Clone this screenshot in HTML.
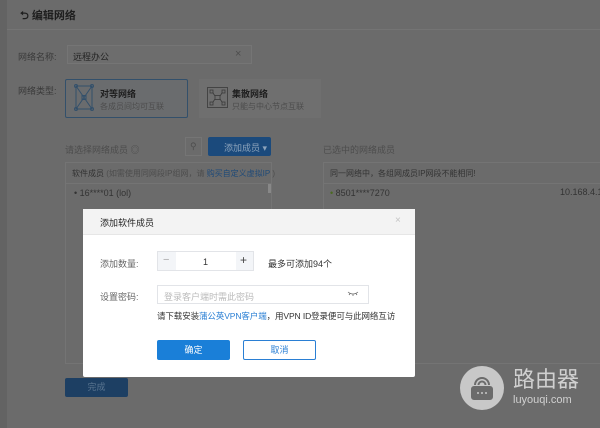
<!DOCTYPE html>
<html><head><meta charset="utf-8"><style>
*{box-sizing:border-box;margin:0;padding:0}
body{width:600px;height:428px;overflow:hidden;background:#6b6b6b;font-family:"Liberation Sans","Noto Sans CJK SC",sans-serif;position:relative;font-size:9px;color:#2a2a2a}
.a{position:absolute;white-space:nowrap}
.t{color:#3a3a3a}
.l{color:#4d4d4d}
</style></head><body>
<div class="a" style="left:0;top:0;width:7px;height:428px;background:#636363"></div>
<div class="a" style="left:7px;top:29px;width:593px;height:1px;background:#747474"></div>
<div class="a" style="left:20px;top:7px;font-size:11px;color:#1e1e1e;font-weight:bold">⮌ 编辑网络</div>
<div class="a t" style="left:18px;top:50px">网络名称:</div>
<div class="a" style="left:67px;top:45px;width:185px;height:19px;border:1px solid #757575;background:#6d6d6d"></div>
<div class="a" style="left:73px;top:50px;color:#222">远程办公</div>
<div class="a" style="left:235px;top:48px;color:#4d4d4d;font-size:11px">×</div>
<div class="a t" style="left:18px;top:84px">网络类型:</div>
<div class="a" style="left:65px;top:79px;width:123px;height:39px;border:1px solid #33506b;border-radius:2px;background:#6a6c6e"></div>
<svg class="a" style="left:74px;top:84px" width="20" height="27" viewBox="0 0 20 27" fill="none" stroke="#33506b" stroke-width="1"><rect x="2" y="2" width="16" height="23"/><path d="M2 2L18 25M18 2L2 25"/><circle cx="2" cy="2" r="1.5"/><circle cx="18" cy="2" r="1.5"/><circle cx="2" cy="25" r="1.5"/><circle cx="18" cy="25" r="1.5"/><rect x="8" y="11.5" width="4" height="4"/></svg>
<div class="a" style="left:100px;top:87px;color:#1e1e1e;font-weight:bold">对等网络</div>
<div class="a l" style="left:100px;top:101px;font-size:8px">各成员间均可互联</div>
<div class="a" style="left:199px;top:79px;width:122px;height:39px;background:#6f6f6f"></div>
<svg class="a" style="left:207px;top:87px" width="21" height="21" viewBox="0 0 21 21" fill="none" stroke="#3a3a3a" stroke-width="0.8"><rect x="0.5" y="0.5" width="20" height="20"/><rect x="3" y="3" width="3" height="3"/><rect x="15" y="3" width="3" height="3"/><rect x="3" y="15" width="3" height="3"/><rect x="15" y="15" width="3" height="3"/><rect x="8" y="8.5" width="5" height="4"/><path d="M6 6L8 9M15 6L13 9M6 15L8 12M15 15L13 12"/></svg>
<div class="a" style="left:232px;top:87px;color:#1e1e1e;font-weight:bold">集散网络</div>
<div class="a l" style="left:232px;top:101px;font-size:8px">只能与中心节点互联</div>
<div class="a l" style="left:65px;top:143px">请选择网络成员 ◎</div>
<div class="a" style="left:185px;top:137px;width:17px;height:19px;border:1px solid #757575"></div>
<div class="a" style="left:190px;top:141px;color:#4d4d4d">⚲</div>
<div class="a" style="left:208px;top:137px;width:63px;height:19px;background:#1b4a7c;border-radius:2px;color:#8ca3bb;padding:4px 0 0 16px">添加成员 ▾</div>
<div class="a l" style="left:323px;top:143px">已选中的网络成员</div>
<div class="a" style="left:65px;top:162px;width:207px;height:202px;border:1px solid #747474"></div>
<div class="a" style="left:66px;top:183px;width:205px;height:1px;background:#747474"></div>
<div class="a" style="left:72px;top:168px;font-size:8px;color:#333">软件成员 <span style="color:#4d4d4d">(如需使用同网段IP组网，请 <span style="color:#1f4a78">购买自定义虚拟IP</span> )</span></div>
<div class="a" style="left:268px;top:184px;width:3px;height:9px;background:#888"></div>
<div class="a" style="left:74px;top:188px;color:#333">• 16****01 (lol)</div>
<div class="a" style="left:323px;top:162px;width:277px;height:202px;border:1px solid #747474;border-right:none"></div>
<div class="a" style="left:324px;top:183px;width:276px;height:1px;background:#747474"></div>
<div class="a" style="left:330px;top:168px;font-size:8px;color:#333">同一网络中，各组网成员IP网段不能相同!</div>
<div class="a" style="left:330px;top:188px;color:#333"><span style="color:#4a6a20">•</span> 8501****7270</div>
<div class="a" style="left:560px;top:187px;color:#333">10.168.4.1</div>
<div class="a" style="left:65px;top:378px;width:63px;height:19px;background:#1d3f63;border-radius:2px;color:#5a7590;text-align:center;line-height:19px">完成</div>
<!-- modal -->
<div class="a" style="left:83px;top:209px;width:332px;height:168px;background:#fff;border-radius:2px"></div>
<div class="a" style="left:83px;top:209px;width:332px;height:26px;background:#f3f3f3;border-bottom:1px solid #e6e6e6"></div>
<div class="a" style="left:100px;top:216px;font-size:9px;color:#222">添加软件成员</div>
<div class="a" style="left:395px;top:215px;color:#c4c4c4;font-size:10px">×</div>
<div class="a" style="left:100px;top:257px;color:#666">添加数量:</div>
<div class="a" style="left:157px;top:251px;width:97px;height:20px;border:1px solid #e2e4e8;background:#f3f5f8"></div>
<div class="a" style="left:176px;top:251px;width:60px;height:20px;background:#fff;border-top:1px solid #e2e4e8;border-bottom:1px solid #e2e4e8"></div>
<div class="a" style="left:163px;top:254px;color:#aaa;font-size:11px">−</div>
<div class="a" style="left:203px;top:257px;color:#333">1</div>
<div class="a" style="left:240px;top:253px;color:#444;font-size:12px">+</div>
<div class="a" style="left:268px;top:257px;color:#333">最多可添加94个</div>
<div class="a" style="left:100px;top:290px;color:#666">设置密码:</div>
<div class="a" style="left:157px;top:285px;width:212px;height:19px;border:1px solid #e2e4e8"></div>
<div class="a" style="left:164px;top:290px;color:#bbb">登录客户端时需此密码</div>
<svg class="a" style="left:347px;top:291px" width="12" height="6" viewBox="0 0 12 6" fill="none" stroke="#666" stroke-width="0.8"><path d="M1 1Q6 5 11 1M3 2.5L2 4M6 3.5V5M9 2.5L10 4"/></svg>
<div class="a" style="left:157px;top:310px;color:#333;font-size:8.5px;letter-spacing:-0.1px">请下载安装<span style="color:#2a7fd4">蒲公英VPN客户端</span>，用VPN ID登录便可与此网络互访</div>
<div class="a" style="left:157px;top:340px;width:73px;height:20px;background:#1a7fd8;border-radius:2px;color:#fff;text-align:center;line-height:20px">确定</div>
<div class="a" style="left:243px;top:340px;width:73px;height:20px;border:1px solid #2a7fd4;border-radius:2px;color:#2a7fd4;text-align:center;line-height:18px">取消</div>
<!-- watermark -->
<div class="a" style="left:460px;top:366px;width:44px;height:44px;border-radius:50%;background:#c8c8c8"></div>
<svg class="a" style="left:469px;top:373px" width="26" height="30" viewBox="0 0 26 30" fill="none" stroke="#6b6b6b" stroke-width="2"><path d="M6 12a7 7 0 0 1 14 0M9.5 12a3.5 3.5 0 0 1 7 0"/><rect x="3" y="14" width="20" height="12" rx="2" fill="#6b6b6b"/><circle cx="9" cy="20" r="1" fill="#c8c8c8" stroke="none"/><circle cx="13" cy="20" r="1" fill="#c8c8c8" stroke="none"/><circle cx="17" cy="20" r="1" fill="#c8c8c8" stroke="none"/></svg>
<div class="a" style="left:513px;top:368px;color:#d0d0d0;font-size:22px;line-height:24px">路由器</div>
<div class="a" style="left:513px;top:394px;color:#d0d0d0;font-size:11px">luyouqi.com</div>
</body></html>
